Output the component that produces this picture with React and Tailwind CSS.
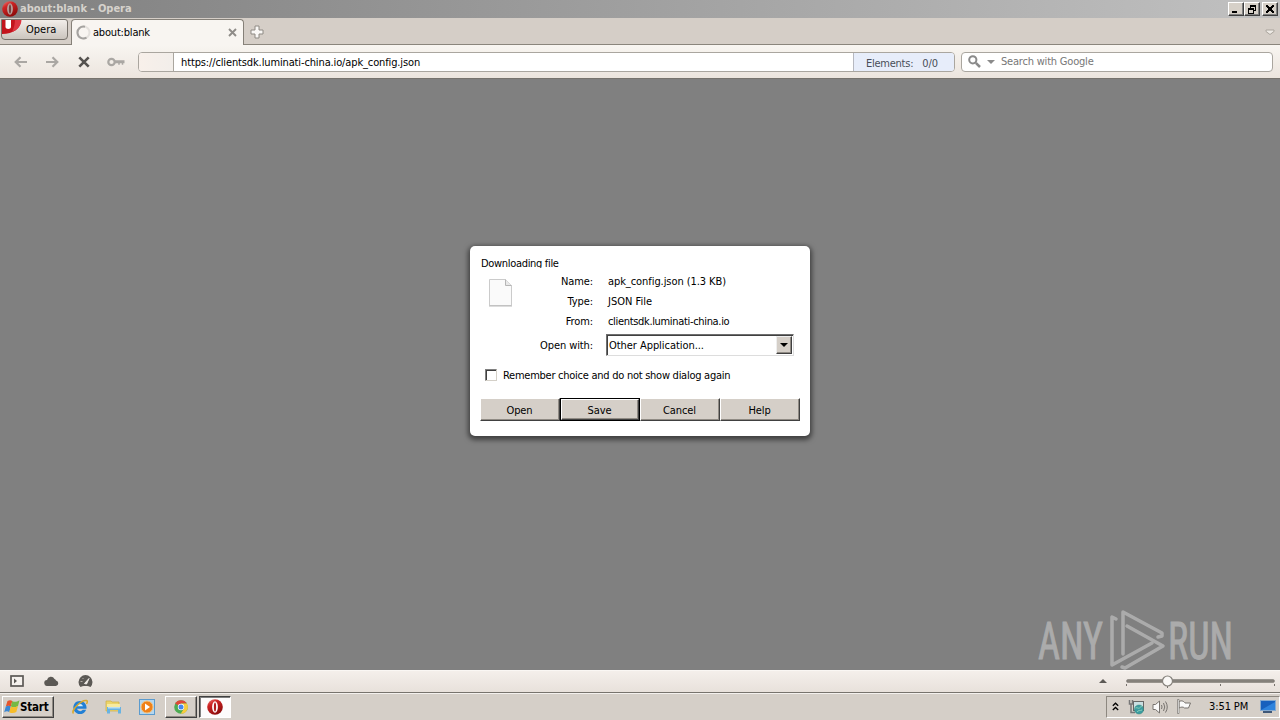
import React from 'react';

const WindowButton = ({ className = '', children }) => (
  <button className={`w-4 h-[14px] bg-[#d6d0c8] border border-t-white border-l-white border-r-[#404040] border-b-[#404040] shadow-[inset_-1px_-1px_0_#808080] flex items-center justify-center ${className}`}>
    <svg width="12" height="11" viewBox="0 0 12 11" fill="none" stroke="#000" shapeRendering="crispEdges">{children}</svg>
  </button>
);

const OperaIcon = ({ size, ring = '#fff', center = '#b31c1c' }) => (
  <svg width={size} height={size} viewBox="0 0 16 16">
    <defs>
      <linearGradient id="operaRed" x1="0" y1="0" x2="0.6" y2="1">
        <stop offset="0" stopColor="#f08a84" />
        <stop offset="0.35" stopColor="#cf2525" />
        <stop offset="1" stopColor="#8d0b0b" />
      </linearGradient>
    </defs>
    <circle cx="8" cy="8" r="7.8" fill="url(#operaRed)" />
    <ellipse cx="8" cy="8" rx="2.9" ry="5.7" fill={ring} />
    <ellipse cx="8" cy="8" rx="1.1" ry="4.6" fill={center} />
  </svg>
);

const TitleBar = () => (
  <div className="h-[18px] flex items-center bg-linear-to-r from-[#808080] to-[#c1c1c1] pl-[2px] pr-[2px]">
    <OperaIcon size={16} ring="#b7a09c" center="#74403d" />
    <span className="ml-[2px] text-[11px] leading-[18px] font-bold text-[#d6d2cc] tracking-[-0.01px]">about:blank - Opera</span>
    <div className="ml-auto flex">
      <WindowButton><path d="M2 8.500h5M2 7.500h5" /></WindowButton>
      <WindowButton><path d="M4 1.500h6M4 2.500h6M9.500 2v5M8 6.500h2M4.500 2v2M2 4.500h6M2 5.500h6M2.500 5v5M7.500 5v5M2 9.500h6" /></WindowButton>
      <WindowButton className="ml-[2px]"><path d="M2 1.500l7 7M3 1.500l7 7M9 1.500l-7 7M10 1.500l-7 7" /></WindowButton>
    </div>
  </div>
);

const TabBar = () => (
  <div className="h-[27px] flex bg-[#d5cec7] shadow-[inset_0_-1px_0_#8a857c]">
    <button className="w-[67px] h-[21px] mt-px ml-px shrink-0 flex items-center rounded-b-[4px] rounded-tr-[3px] border border-[#77726b] bg-linear-to-b from-[#f2eeea] to-[#cbc5be] overflow-hidden">
      <svg width="20" height="20" viewBox="0 0 20 20" className="self-start -mt-px">
        <path d="M0 0h19c0 9-7 15-19 15z" fill="#c3141c" />
        <path d="M3.500 0H9v8c0 2.500-5.500 2.500-5.500 0z" fill="#fff" />
        <path d="M13 0h6.500c0 7-4 11-9.500 13 2-4 3-8 3-13z" fill="#dc3540" />
      </svg>
      <span className="ml-[4px] pt-[2px] text-[11px] tracking-[0px]">Opera</span>
    </button>
    <div className="w-[173px] h-[26px] mt-px ml-[3px] shrink-0 flex items-center rounded-t-[4px] border border-b-0 border-[#858078] bg-[#f8f5f1] pl-[4px]">
      <svg width="15" height="15" viewBox="0 0 15 15" fill="none" strokeWidth="2">
        <circle cx="7.500" cy="7.500" r="6" stroke="#e4e1dd" />
        <path d="M10.500 12.700A6 6 0 1 1 9 1.700" stroke="#a5a3a0" />
      </svg>
      <span className="ml-[2px] pt-[2px] text-[11px] tracking-[-0.19px]">about:blank</span>
      <svg width="9" height="9" viewBox="0 0 9 9" className="ml-auto mr-[6px]" stroke="#8f8c88" strokeWidth="1.900">
        <path d="M1 1l7 7M8 1l-7 7" />
      </svg>
    </div>
    <svg width="14" height="14" viewBox="0 0 14 14" className="ml-[6px] mt-[7px]">
      <path d="M5 1h4v4h4v4H9v4H5V9H1V5h4z" fill="#faf8f6" stroke="#8e8a84" />
    </svg>
    <svg width="10" height="7" viewBox="0 0 10 7" className="ml-auto mr-[5px] mt-[11px]">
      <path d="M1 1h8v1.500L5 5.500 1 2.500z" fill="#eeeae5" stroke="#aaa59d" />
    </svg>
  </div>
);

const Toolbar = () => (
  <div className="h-[34px] flex items-center bg-linear-to-b from-[#f8f5f1] to-[#ece5de] border-b border-[#77736d]">
    <svg width="14" height="12" viewBox="0 0 14 12" className="ml-[14px]" fill="none" stroke="#aaa7a3" strokeWidth="2.200">
      <path d="M13 6H2M6.500 1.200L1.700 6l4.800 4.800" />
    </svg>
    <svg width="14" height="12" viewBox="0 0 14 12" className="ml-[17px]" fill="none" stroke="#aaa7a3" strokeWidth="2.200">
      <path d="M1 6h11M7.500 1.200L12.300 6l-4.800 4.800" />
    </svg>
    <svg width="12" height="12" viewBox="0 0 12 12" className="ml-[19px]" stroke="#55524f" strokeWidth="2.600">
      <path d="M1.300 1.300l9.400 9.400M10.700 1.300l-9.400 9.400" />
    </svg>
    <svg width="19" height="10" viewBox="0 0 19 10" className="ml-[17px]" fill="none" stroke="#aaa7a3">
      <circle cx="4.500" cy="5" r="3.200" strokeWidth="2.200" />
      <path d="M8 4h9.500M8 5.500h9.500" strokeWidth="1.500" />
      <path d="M12 5.500v2.200M15.500 5.500v2.200" strokeWidth="1.500" />
    </svg>
    <div className="ml-[12px] w-[817px] h-5 flex rounded-[4px] border border-[#aaa69f] bg-white overflow-hidden">
      <div className="w-[35px] border-r border-[#aaa69f] bg-linear-to-r from-[#f8f0ea] to-[#f2eeea]" />
      <span className="flex-1 pl-[7px] text-[11px] leading-[19px] tracking-[-0.13px]">https://clientsdk.luminati-china.io/apk_config.json</span>
      <div className="w-[101px] flex border-l border-[#b6b8c0] bg-[#e7edfa] pl-[12px] pt-px text-[11px] leading-[19px] text-[#494d58]">
        <span className="tracking-[-0.25px]">Elements:</span>
        <span className="ml-[9px] tracking-[-0.1px]">0/0</span>
      </div>
    </div>
    <div className="ml-[6px] w-[312px] h-5 flex items-center rounded-[4px] border border-[#aaa69f] bg-white pl-[6px]">
      <svg width="13" height="13" viewBox="0 0 13 13" fill="none" stroke="#8a8a8a">
        <circle cx="4.800" cy="4.800" r="3.600" strokeWidth="2" />
        <path d="M7.800 7.800l4.200 4.200" strokeWidth="2.500" />
      </svg>
      <svg width="8" height="4" viewBox="0 0 8 4" className="ml-[6px]"><path d="M0 0h8L4 4z" fill="#8a8a8a" /></svg>
      <span className="ml-[6px] pt-px text-[11px] leading-[18px] text-[#777] tracking-[-0.2px]">Search with Google</span>
    </div>
  </div>
);

const rows = [
  { label: 'Name:', value: 'apk_config.json (1.3 KB)', spacing: 'tracking-[-0.07px]' },
  { label: 'Type:', value: 'JSON File', spacing: 'tracking-[0px]' },
  { label: 'From:', value: 'clientsdk.luminati-china.io', spacing: 'tracking-[-0.33px]' },
];

const DialogButton = ({ active, children }) => (
  <div className={`w-20 h-[23px] ${active ? 'border border-black' : ''}`}>
    <button className="w-full h-full bg-[#d5cfc8] border border-t-white border-l-white border-r-[#404040] border-b-[#404040] shadow-[inset_-1px_-1px_0_#908b84] text-[11px] leading-[20px] tracking-[-0.1px] flex items-center justify-center pt-[2px] pr-px">
      {children}
    </button>
  </div>
);

const DownloadDialog = () => (
  <div className="w-[340px] h-[190px] bg-white rounded-[5px] shadow-[0_2px_5px_2px_rgba(0,0,0,0.5)] px-[10px] pt-[11px] text-[11px]">
    <h2 className="pl-px h-[11px] leading-[14px] tracking-[-0.32px] overflow-hidden">Downloading file</h2>
    <div className="flex h-[66px]">
      <svg width="25" height="29" viewBox="0 0 25 29" className="ml-[8px] mt-[10px] shrink-0">
        <path d="M1.500 1.500h16l6 6v20h-22z" fill="#fafafa" stroke="#cbcbcb" />
        <path d="M17.500 1.500v6h6" fill="#e8e8e8" stroke="#b5b5b5" />
        <path d="M1 28h23" stroke="#b9b9b9" />
      </svg>
      <div className="mt-[4px]">
        {rows.map((row) => (
          <div key={row.label} className="flex h-5 leading-[20px]">
            <span className="w-[80px] text-right tracking-[-0.1px]">{row.label}</span>
            <span className={`ml-[15px] whitespace-nowrap ${row.spacing}`}>{row.value}</span>
          </div>
        ))}
      </div>
    </div>
    <div className="flex items-center h-[22px]">
      <span className="w-[113px] pt-[2px] text-right tracking-[-0.1px]">Open with:</span>
      <div className="ml-[13px] w-[188px] h-[22px] flex border border-t-[#6f6f6f] border-l-[#6f6f6f] border-r-[#ddd] border-b-[#ddd] shadow-[inset_1px_1px_0_#404040] p-px">
        <span className="flex-1 pl-[1px] leading-[20px] tracking-[-0.05px]">Other Application...</span>
        <div className="w-4 bg-[#d5cfc8] border border-t-[#eee] border-l-[#eee] border-r-[#404040] border-b-[#404040] shadow-[inset_-1px_-1px_0_#908b84] flex items-center justify-center">
          <svg width="8" height="4" viewBox="0 0 8 4"><path d="M0 0h8L4 4z" /></svg>
        </div>
      </div>
    </div>
    <div className="flex items-center mt-[11px] h-4 pl-[5px]">
      <div className="w-3 h-3 border border-t-[#808080] border-l-[#808080] border-r-[#d4d0c8] border-b-[#d4d0c8] shadow-[inset_1px_1px_0_#404040]" />
      <span className="ml-[6px] pt-[2px] tracking-[-0.26px]">Remember choice and do not show dialog again</span>
    </div>
    <div className="flex mt-[15px]">
      <DialogButton>Open</DialogButton>
      <DialogButton active>Save</DialogButton>
      <DialogButton>Cancel</DialogButton>
      <DialogButton>Help</DialogButton>
    </div>
  </div>
);

const Watermark = () => (
  <svg width="200" height="64" viewBox="0 0 200 64" className="absolute right-[43px] bottom-[-1px] opacity-60" fill="#c9c9c9" stroke="#c9c9c9">
    <g fontFamily="Roboto, sans-serif" fontSize="52" strokeWidth="0.900">
      <text x="1" y="52" textLength="65" lengthAdjust="spacingAndGlyphs">ANY</text>
      <text x="131" y="52" textLength="65" lengthAdjust="spacingAndGlyphs">RUN</text>
    </g>
    <g fill="none" strokeWidth="3.500" strokeLinejoin="round" strokeLinecap="round">
      <path d="M79 12l-4-2v48l40-22" />
      <path d="M86 47V5l39 21v3l-4 1" />
      <path d="M90 19l36 20-38 22-3-1" />
    </g>
  </svg>
);

const StatusBar = () => (
  <div className="h-[22px] flex items-center border-t border-[#faf7f4] bg-linear-to-b from-[#f4efeb] to-[#e8e1db] pb-px">
    <svg width="14" height="12" viewBox="0 0 14 12" className="ml-[10px]">
      <rect x="1" y="1" width="12" height="10" fill="#f6f2ee" stroke="#5c5955" strokeWidth="1.700" />
      <path d="M4 3.500L7 6 4 8.500z" fill="#5c5955" />
    </svg>
    <svg width="15" height="10" viewBox="0 0 15 10" className="ml-[20px]">
      <path d="M3.500 10a3 3 0 0 1-.5-6 4 4 0 0 1 7.500-1A3 3 0 0 1 12 4.500 2.800 2.800 0 0 1 12 10z" fill="#5c5955" />
    </svg>
    <svg width="15" height="13" viewBox="0 0 15 13" className="ml-[19px]">
      <path d="M2.500 12a7 7 0 1 1 10 0c-1-1.500-9-1.500-10 0z" fill="#5c5955" />
      <path d="M6.500 8.500L11 3.500 8.500 9z" fill="#f1ece7" stroke="#f1ece7" />
      <path d="M2.500 6.500h2M4.500 3l1 1" stroke="#b5afa8" />
    </svg>
    <svg width="8" height="4" viewBox="0 0 8 4" className="ml-auto"><path d="M0 4h8L4 0z" fill="#5c5955" /></svg>
    <svg width="150" height="16" viewBox="0 0 150 16" className="ml-[19px] mr-[4px]">
      <rect x="0.500" y="6.500" width="148" height="3" rx="1.500" fill="#85817b" stroke="#77736d" strokeWidth="0.500" />
      <path d="M.5 11v2M94.500 11v2M148.500 11v2M41.500 13v2" stroke="#77736d" />
      <circle cx="41.500" cy="8" r="5" fill="#faf8f6" stroke="#85817b" strokeWidth="1.200" />
    </svg>
  </div>
);

const WindowsFlag = () => (
  <svg width="16" height="16" viewBox="0 0 16 16">
    <path d="M3.500 2c2-1.300 3.500-1 4.800 0L6.800 7.500C5.300 6.500 3.800 6.500 1.800 7.500z" fill="#e6552b" />
    <path d="M8.300 2c2 1.300 4 1.200 7.200-.8L14 7c-2.500 1.500-5 1.600-7.200.5z" fill="#76b943" />
    <path d="M1.800 7.500c2-1 3.500-1 5 0L5.300 13.200C3.800 12 2 12.200.2 13.200z" fill="#3b87d3" />
    <path d="M6.800 7.500c2.200 1.100 4.700 1 7.200-.5l-1.700 6c-2.300 1.300-4.800 1.400-7 .2z" fill="#f7bd2a" />
  </svg>
);

const Taskbar = () => (
  <div className="h-[28px] flex items-center bg-[#d5cfc8] border-t border-[#77736d] shadow-[inset_0_1px_0_#f4f1ee] pl-[2px]">
    <button className="w-[52px] h-[22px] flex items-center border border-t-white border-l-white border-r-[#404040] border-b-[#404040] shadow-[inset_-1px_-1px_0_#908b84] pl-px">
      <WindowsFlag />
      <span className="pt-[2px] text-[11.5px] font-bold tracking-[-0.2px]">Start</span>
    </button>
    <svg width="16" height="16" viewBox="0 0 16 16" className="ml-[18px]">
      <path d="M14.500 9.800H5a3.300 3.300 0 0 0 5.800 1h3.300A6.600 6.600 0 1 1 14.500 8z" fill="#2280d5" />
      <path d="M5 7.200a3.200 3.200 0 0 1 6 0z" fill="#d5eefd" />
      <path d="M1.500 14.500c-3-3 8-14 13-13 1.500.5.500 2.500 0 3.500" fill="none" stroke="#d9a92d" strokeWidth="1.500" />
    </svg>
    <svg width="17" height="16" viewBox="0 0 17 16" className="ml-[17px]">
      <path d="M1 2h5l1 1h7v9H1z" fill="#ecd56b" stroke="#cfae43" strokeWidth="0.700" />
      <path d="M2 5h13v6H2z" fill="#f7eaa0" />
      <path d="M2 8h14v6.500h-3V11H5v3.500H2z" fill="#68b3e2" />
      <path d="M3 8h12v1.500H3z" fill="#b8ddf3" />
    </svg>
    <svg width="16" height="16" viewBox="0 0 16 16" className="ml-[17px]">
      <rect x="0.500" y="0.500" width="15" height="15" fill="#b5d7ef" stroke="#5b9bce" />
      <circle cx="8" cy="8" r="6" fill="#ef8119" stroke="#f5c17a" />
      <path d="M6 4.500l5 3.500-5 3.500z" fill="#fff" />
    </svg>
    <div className="ml-[10px] w-[32px] h-[22px] flex items-center justify-center border border-t-white border-l-white border-r-[#404040] border-b-[#404040] shadow-[inset_-1px_-1px_0_#908b84]">
      <svg width="14" height="14" viewBox="0 0 14 14">
        <circle cx="7" cy="7" r="6.800" fill="#4dab52" />
        <path d="M7 7L1.100 3.600A6.800 6.800 0 0 1 12.900 3.600H7z" fill="#df4738" />
        <path d="M7 3.600h5.900A6.800 6.800 0 0 1 6.700 13.800L10 8.500z" fill="#f8cc3d" />
        <circle cx="7" cy="7" r="3.200" fill="#fff" />
        <circle cx="7" cy="7" r="2.500" fill="#4587ec" />
      </svg>
    </div>
    <div className="ml-[2px] w-[32px] h-[22px] flex items-center justify-center bg-[#fdfcfc] border border-t-[#404040] border-l-[#404040] border-r-white border-b-white shadow-[inset_1px_1px_0_#808080] pr-px">
      <OperaIcon size={16} />
    </div>
    <div className="ml-auto w-[174px] h-[22px] flex items-center border border-t-[#8d8880] border-l-[#8d8880] border-r-white border-b-white pl-[5px]">
      <svg width="7" height="9" viewBox="0 0 7 9" fill="none" stroke="#000" strokeWidth="1.300">
        <path d="M.8 3.700l2.700-2.500 2.700 2.500M.8 8l2.700-2.500L6.200 8" />
      </svg>
      <svg width="17" height="16" viewBox="0 0 17 16" className="ml-[9px]">
        <rect x="5.500" y="2.500" width="10" height="9" fill="#c9dfe2" stroke="#666" />
        <path d="M1.500 1v4h3V1M3 5v8.500h4" fill="none" stroke="#777" strokeWidth="1.500" />
        <circle cx="11" cy="10.500" r="4.500" fill="#3c9ba2" stroke="#387" strokeWidth="0.500" />
        <path d="M7.500 9c2-1 3 1 4 0s2-2 2.500-1M9 13c1-2 3-1 5-2" fill="none" stroke="#89d0b5" />
      </svg>
      <svg width="16" height="14" viewBox="0 0 16 14" className="ml-[7px]" fill="none" stroke="#77736f">
        <path d="M1 4.500h2.500L7.500 1v12L3.500 9.500H1z" fill="#fafafa" />
        <path d="M9.500 5q1 2 0 4M11.500 3q2.500 4 0 8M13.500 1.500q3.500 5.500 0 11" />
      </svg>
      <svg width="16" height="15" viewBox="0 0 16 15" className="ml-[8px]">
        <path d="M3 2.500c3-1.500 5 0 6 1.500h5.500L12.500 9H8.500C7 7.500 5 8 3 9z" fill="#fafafa" stroke="#77736f" />
        <path d="M1.500.5h1.500v14H1.500z" fill="#fafafa" stroke="#77736f" strokeWidth="0.700" />
      </svg>
      <span className="ml-[17px] pt-[2px] text-[11px] tracking-[-0.1px] whitespace-nowrap">3:51 PM</span>
      <svg width="17" height="13" viewBox="0 0 17 13" className="ml-[12px] shrink-0">
        <rect x="0.500" y="0.500" width="15" height="10" fill="#1760bd" stroke="#86aad0" />
        <path d="M8 6l7-4v8H1z" fill="#2e83dd" />
        <path d="M3 12h9" stroke="#3f5878" strokeWidth="2" />
      </svg>
    </div>
  </div>
);

export default function App() {
  return (
    <div className="w-[1280px] h-[720px] flex flex-col overflow-hidden text-black font-['DejaVu_Sans_Condensed','DejaVu_Sans',sans-serif] [font-stretch:condensed]">
      <TitleBar />
      <TabBar />
      <Toolbar />
      <main className="relative flex-1 bg-[#808080] flex justify-center items-start pt-[167px]">
        <DownloadDialog />
        <Watermark />
      </main>
      <StatusBar />
      <Taskbar />
    </div>
  );
}
